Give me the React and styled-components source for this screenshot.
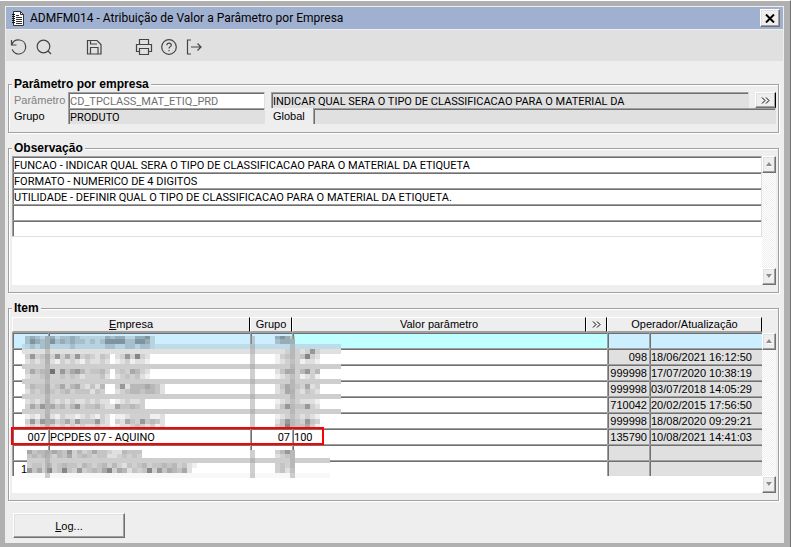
import React from 'react';
import styled, { createGlobalStyle, css } from 'styled-components';

const observacoes = [
    'FUNCAO - INDICAR QUAL SERA O TIPO DE CLASSIFICACAO PARA O MATERIAL DA ETIQUETA',
    'FORMATO - NUMERICO DE 4 DIGITOS',
    'UTILIDADE - DEFINIR QUAL O TIPO DE CLASSIFICACAO PARA O MATERIAL DA ETIQUETA.',
    '',
    '',
];

const itens = [
    {},
    { operador: '098', data: '18/06/2021 16:12:50' },
    { operador: '999998', data: '17/07/2020 10:38:19' },
    { operador: '999998', data: '03/07/2018 14:05:29' },
    { operador: '710042', data: '20/02/2015 17:56:50' },
    { operador: '999998', data: '18/08/2020 09:29:21' },
    { codigo: '007', nome: 'PCPDES 07 - AQUINO', grupo: '07', valor: '100', operador: '135790', data: '10/08/2021 14:41:03' },
    {},
    {},
];

// censored area: one letter per 5px cell, from "a" (lightest) to "i" (darkest)
const tones = {
    a: '#f0f0f0',
    b: '#e0e0e0',
    c: '#d0d0d0',
    d: '#c4c4c4',
    e: '#b8b8b8',
    f: '#a8a8a8',
    g: '#989898',
    h: '#868686',
    i: '#727272',
    q: '#b7d3df',
    r: '#a5c0cc',
    s: '#94adb8',
    t: '#7e959f',
};

const mosaic = [
    [13, 4, 'rsrqrsqrrsrqqqqqsrssqqsstq'],
    [13, 7, 'rtsrrtrsrsrrqrqrttttrrttsq'],
    [13, 12, 'qrqrrqqqqrqqqqqqrrqqrrqrrq'],
    [13, 22, 'cgcdecgcfcgcdcbdc.bcgchcb'],
    [13, 27, 'bcbcdbacbcbacbbcb.abcabba'],
    [13, 37, 'cfdedicgdfgecddec.cdcfecb'],
    [13, 42, 'bccddccdcdcbcccdb.bcdcdba'],
    [13, 52, 'ceddecdfcefcbdbe..cgbeeefedb'],
    [13, 57, 'bdcdedcdecdddbdc..bcdeedeedb'],
    [13, 67, 'bcbcdcbcbcbbcbcbb.abcbbc'],
    [13, 72, 'cfdgdfdecegcddecbbfddedc'],
    [13, 82, 'abacdbacbbabcbacb.aabccccaab'],
    [13, 87, 'cgcgefcdfcgdddgcb.cbfdcgdedb'],
    [13, 92, 'bcbcdcbcbcbcbbcbb.abbcdcbcab'],
    [15, 118, 'fdeeefedgcecdfddcbbeddd'],
    [15, 122, 'dededcedfcdedcddbbcdcdc'],
    [15, 131, 'cddcecdeddcedcdececbdcdecddedecdba'],
    [15, 136, 'gdfchcdhdcgcdedfhcfebdcdhcgdfedfb'],
    [263, 4, 'sts'],
    [263, 7, 'rssr'],
    [263, 17, 'bbcccbcgc'],
    [263, 22, 'acdccdhcb'],
    [263, 27, 'abcbcabba'],
    [263, 37, 'bdfecegce'],
    [263, 42, 'abcbcabca'],
    [263, 52, 'bdfcdcfbc'],
    [263, 57, 'bcfdcbdcb'],
    [263, 67, 'abcbcbbba'],
    [263, 72, 'bdgcddgcb'],
    [263, 82, 'abcbcbcba'],
    [263, 87, 'bdgcdcgdc'],
    [263, 92, 'cdhcddfca'],
    [263, 118, 'cegc'],
    [263, 122, 'bcdc'],
    [263, 131, 'cdcc'],
    [263, 136, 'cdbb'],
];

const Mosaic = () => (
    <MosaicSvg width="330" height="148" aria-hidden="true" shapeRendering="crispEdges">
        <rect x="10" y="12" width="319" height="5" fill="#bfdbe7" />
        <rect x="10" y="17" width="319" height="5" fill="#e0e0e0" />
        <rect x="10" y="22" width="319" height="73" fill="#fff" />
        <rect x="15" y="118" width="303" height="28" fill="#fff" />
        {[32, 47, 62, 77].map(y => (
            <rect key={y} x="10" y={y} width="319" height="5" fill="#cecece" />
        ))}
        <rect x="15" y="141" width="303" height="5" fill="#f8f8f8" />
        {mosaic.map(([x, y, cells]) =>
            cells.split('').map((tone, i) =>
                tones[tone] ? (
                    <rect key={`${x}-${y}-${i}`} x={x + i * 5} y={y} width="5" height="5" fill={tones[tone]} />
                ) : null
            )
        )}
        <rect x="15" y="126" width="303" height="5" fill="#cecece" />
        {[33, 238, 278].map(x => (
            <g key={x} fill="#a0a0a0" fillOpacity="0.5">
                <rect x={x} y="4" width="5" height="91" />
                <rect x={x} y="118" width="5" height="28" />
            </g>
        ))}
    </MosaicSvg>
);

const Group = ({ title, children }) => (
    <Fieldset>
        <legend>{title}</legend>
        {children}
    </Fieldset>
);

const Chevrons = () => (
    <svg width="9" height="7" viewBox="0 0 9 7" fill="none" stroke="#000" aria-hidden="true">
        <path d="M1 .5 4 3.500 1 6.500M5 .5 8 3.500 5 6.500" />
    </svg>
);

const ScrollBar = () => (
    <Scroll>
        <ScrollButton type="button" aria-label="Rolar para cima">
            <svg width="7" height="5" viewBox="0 0 7 5" aria-hidden="true">
                <path d="M1 5H7L4 1z" fill="#fff" />
                <path d="M0 4H6L3 0z" fill="#8c8c8c" />
            </svg>
        </ScrollButton>
        <ScrollButton type="button" aria-label="Rolar para baixo">
            <svg width="7" height="5" viewBox="0 0 7 5" aria-hidden="true">
                <path d="M1 1H7L4 5z" fill="#fff" />
                <path d="M0 0H6L3 4z" fill="#8c8c8c" />
            </svg>
        </ScrollButton>
    </Scroll>
);

const Toolbar = () => (
    <ToolbarBox>
        <ToolGroup>
            <Tool type="button" aria-label="Desfazer">
                <svg width="18" height="18" viewBox="0 0 18 18">
                    <path d="M1.500 2v5h5M1.800 6.700C3 3.500 6 1.600 9.500 2a7 7 0 1 1-7.300 9.600" />
                </svg>
            </Tool>
            <Tool type="button" aria-label="Pesquisar">
                <svg width="18" height="18" viewBox="0 0 18 18">
                    <circle cx="8.500" cy="8.500" r="6.300" />
                    <path d="m13 13 3 3" />
                </svg>
            </Tool>
        </ToolGroup>
        <ToolGroup>
            <Tool type="button" aria-label="Salvar">
                <svg width="18" height="18" viewBox="0 0 18 18">
                    <path d="M3.500 2.500H12l4 4v9.500H2.500V2.500zM5.500 16v-6.500h7.500V16M5.500 2.500v3.500h6.500" />
                </svg>
            </Tool>
        </ToolGroup>
        <ToolGroup>
            <Tool type="button" aria-label="Imprimir">
                <svg width="18" height="18" viewBox="0 0 18 18">
                    <path d="M4.500 6.500v-5h9v5M4.500 13.500h-3v-7h15v7h-3M4.500 10.500h9v6h-9z" />
                </svg>
            </Tool>
            <Tool type="button" aria-label="Ajuda">
                <svg width="18" height="18" viewBox="0 0 18 18">
                    <circle cx="9" cy="9" r="7.300" />
                    <path d="M6.800 7.200c.2-2.800 4.700-2.500 4.500 0C11.200 8.600 9 8.700 9 10.400M9 12v1.200" />
                </svg>
            </Tool>
            <Tool type="button" aria-label="Sair">
                <svg width="18" height="18" viewBox="0 0 18 18">
                    <path d="M6 2H2.500v14H6M6 9h10M12.500 5.500 16 9l-3.500 3.500" />
                </svg>
            </Tool>
        </ToolGroup>
    </ToolbarBox>
);

export default () => (
    <Frame>
        <GlobalStyle />
        <Window>
            <TitleBar>
                <svg width="13" height="15" viewBox="0 0 13 15" aria-hidden="true">
                    <path d="M1.500.5h7l3 3v11h-10z" fill="#fff" stroke="#333" />
                    <path d="M8.500.5v3h3" fill="none" stroke="#333" />
                    <path d="M0 3.500h3M0 5.500h3M0 7.500h3M0 9.500h3M0 11.500h3" stroke="#111" />
                    <path d="M4 4.500h3M4 6.500h6M4 8.500h6M4 10.500h6M4 12.500h6" stroke="#333" />
                </svg>
                <h1>ADMFM014 - Atribuição de Valor a Parâmetro por Empresa</h1>
                <CloseButton type="button" aria-label="Fechar">
                    <svg width="10" height="9" viewBox="0 0 10 9" aria-hidden="true">
                        <path d="M1 .5 9 8.500M9 .5 1 8.500" stroke="#000" strokeWidth="2" />
                    </svg>
                </CloseButton>
            </TitleBar>
            <Toolbar />
            <Content>
                <Group title="Parâmetro por empresa">
                    <FieldRow>
                        <Label $dim $width={54} htmlFor="parametro">Parâmetro</Label>
                        <Field id="parametro" $dim $width={197} defaultValue="CD_TPCLASS_MAT_ETIQ_PRD" />
                        <Spacer />
                        <Field
                            aria-label="Descrição"
                            $gray
                            readOnly
                            defaultValue="INDICAR QUAL SERA O TIPO DE CLASSIFICACAO PARA O MATERIAL DA"
                        />
                        <Spacer />
                        <MoreButton type="button" aria-label="Mais">
                            <Chevrons />
                        </MoreButton>
                    </FieldRow>
                    <FieldRow $last>
                        <Label $width={54} htmlFor="grupo">Grupo</Label>
                        <Field id="grupo" $gray $width={197} readOnly defaultValue="PRODUTO" />
                        <Spacer />
                        <Label $indent $width={42} htmlFor="global">Global</Label>
                        <Field id="global" $gray readOnly />
                    </FieldRow>
                </Group>
                <Group title="Observação">
                    <Panel>
                        <Lines>
                            {observacoes.map((texto, i) => (
                                <Field key={i} aria-label={`Observação ${i + 1}`} defaultValue={texto} />
                            ))}
                        </Lines>
                        <ScrollBar />
                    </Panel>
                </Group>
                <Group title="Item">
                    <ItemPanel>
                        <TableBox>
                            <Table>
                                <colgroup>
                                    <Col $width={36} />
                                    <Col $width={202} />
                                    <Col $width={42} />
                                    <col />
                                    <Col $width={21} />
                                    <Col $width={42} />
                                    <Col $width={113} />
                                </colgroup>
                                <thead>
                                    <tr>
                                        <th colSpan="2"><u>E</u>mpresa</th>
                                        <th>Grupo</th>
                                        <th>Valor parâmetro</th>
                                        <th><HeadButton type="button" aria-label="Mais valores"><Chevrons /></HeadButton></th>
                                        <th colSpan="2">Operador/Atualização</th>
                                    </tr>
                                </thead>
                                <tbody>
                                    {itens.map((item, i) => (
                                        <tr key={i}>
                                            <Cell $right $active={i === 0}>{item.codigo}</Cell>
                                            <Cell $active={i === 0}>{item.nome}</Cell>
                                            <Cell $right $active={i === 0}>{item.grupo}</Cell>
                                            <Cell $current={i === 0} colSpan="2">{item.valor}</Cell>
                                            <Cell $gray $right $active={i === 0}>{item.operador}</Cell>
                                            <Cell $gray $active={i === 0}>{item.data}</Cell>
                                        </tr>
                                    ))}
                                </tbody>
                            </Table>
                            <PartialCode>1</PartialCode>
                            <Mosaic />
                            <Highlight />
                        </TableBox>
                        <ScrollBar />
                    </ItemPanel>
                </Group>
                <LogButton type="button"><span><u>L</u>og...</span></LogButton>
            </Content>
        </Window>
    </Frame>
);

const GlobalStyle = createGlobalStyle`
    * {
        box-sizing: border-box;
    }

    body {
        margin: 0;
        background: #b0b0b0;
        color: #000;
        font: 11px/14px 'Liberation Sans', Arial, sans-serif;
    }

    button,
    input {
        margin: 0;
        padding: 0;
        border: 0;
        border-radius: 0;
        font: inherit;
        color: inherit;
    }
`;

const raised = css`
    display: flex;
    align-items: center;
    justify-content: center;
    background: #eee;
    border: 1px solid;
    border-color: #fff #707070 #707070 #fff;
    box-shadow: inset -1px -1px 0 #a0a0a0, inset 1px 1px 0 #e0e0e0;
`;

const sunken = css`
    border-top: 1px solid #a0a0a0;
    border-left: 1px solid #a0a0a0;
    box-shadow: inset 1px 1px 0 #707070;
    font-family: Roboto, sans-serif;
`;

const Frame = styled.div`
    display: flex;
    min-height: 100vh;
    padding: 5px 6px 5px 5px;
    background: #b0b0b0;
    border-top: 1px solid #fff;
    border-right: 1px solid #707070;
`;

const Window = styled.main`
    flex: 1;
    min-width: 0;
    background: #eee;
    border: 1px solid #eee;
`;

const TitleBar = styled.header`
    display: flex;
    align-items: center;
    height: 22px;
    padding: 0 3px 0 6px;
    background: #a0b0d0;

    h1 {
        flex: 1;
        margin: 0 0 0 5px;
        font: 12px/16px Roboto, sans-serif;
    }
`;

const CloseButton = styled.button`
    ${raised}
    width: 20px;
    height: 18px;
`;

const ToolbarBox = styled.nav`
    display: flex;
    gap: 32px;
    height: 31px;
    margin-top: 1px;
    padding: 2px 0 0 4px;
    background: #e0e0e0;
`;

const ToolGroup = styled.div`
    display: flex;
    align-items: center;
    gap: 7px;
`;

const Tool = styled.button`
    width: 18px;
    height: 18px;
    background: none;

    svg {
        display: block;
        fill: none;
        stroke: #444;
        stroke-width: 1.2;
    }
`;

const Content = styled.div`
    display: flex;
    flex-direction: column;
    gap: 8px;
    padding: 16px 4px 4px 2px;
`;

const Fieldset = styled.fieldset`
    min-width: 0;
    margin: 0;
    padding: 1px 2px 7px 3px;
    border: 1px solid #a0a0a0;
    box-shadow: 1px 1px 0 #fff, inset 1px 1px 0 #fff;

    legend {
        padding: 0 2px;
        background: #eee;
        font-size: 12px;
        font-weight: bold;
    }
`;

const FieldRow = styled.div`
    display: flex;
    height: ${({ $last }) => ($last ? 17 : 16)}px;
    padding-left: 2px;
`;

const Label = styled.label`
    flex: none;
    width: ${({ $width }) => $width}px;
    padding: 1px 0 0 ${({ $indent }) => ($indent ? 2 : 0)}px;
    color: ${({ $dim }) => ($dim ? '#808080' : '#000')};
`;

const Field = styled.input`
    ${sunken}
    flex: ${({ $width }) => ($width ? 'none' : '1')};
    width: ${({ $width }) => ($width ? `${$width}px` : '100%')};
    min-width: 0;
    height: 16px;
    padding: 1px 1px 0;
    border-right: 1px solid #e0e0e0;
    background: ${({ $gray }) => ($gray ? '#e0e0e0' : '#fff')};
    color: ${({ $dim }) => ($dim ? '#707070' : '#000')};
`;

const Spacer = styled.div`
    width: 6px;
`;

const MoreButton = styled.button`
    ${raised}
    width: 21px;
    border-right-color: #000;
`;

const Panel = styled.div`
    display: flex;
    height: 129px;
`;

const Lines = styled.div`
    flex: 1;
    background: #fff;
    display: flex;
    flex-direction: column;

    input {
        flex: none;
    }

    input:last-child {
        height: 17px;
        border-bottom: 1px solid #e0e0e0;
    }
`;

const Scroll = styled.div`
    display: flex;
    flex-direction: column;
    justify-content: space-between;
    width: 14px;
    background: repeating-conic-gradient(#fff 0 25%, #eee 0 50%) 0 0 / 2px 2px;
`;

const ScrollButton = styled.button`
    ${raised}
    width: 14px;
    height: 17px;
`;

const ItemPanel = styled.div`
    display: flex;
    height: 177px;
    padding-top: 1px;

    ${Scroll} {
        margin-top: 16px;
    }
`;

const TableBox = styled.div`
    position: relative;
    flex: 1;
    background: #fff;
`;

const Table = styled.table`
    width: 100%;
    table-layout: fixed;
    border-collapse: separate;
    border-spacing: 0;
    line-height: 13px;

    th {
        height: 15px;
        padding: 0;
        background: #eee;
        border-top: 1px solid #fff;
        border-left: 1px solid #fff;
        border-right: 1px solid #000;
        border-bottom: 1px solid #a0a0a0;
        font-weight: normal;
    }
`;

const Col = styled.col`
    width: ${({ $width }) => $width}px;
`;

const Cell = styled.td`
    ${sunken}
    height: 16px;
    padding: 2px 2px 0 1px;
    overflow: hidden;
    white-space: nowrap;
    font-family: ${({ $gray }) => ($gray ? "'Liberation Sans', Arial" : 'Roboto')}, sans-serif;
    text-align: ${({ $right }) => ($right ? 'right' : 'left')};
    background: ${({ $active, $current, $gray }) =>
        ($active && '#ccefff') || ($current && '#c0ffff') || ($gray && '#e0e0e0') || '#fff'};
`;

const HeadButton = styled.button`
    display: flex;
    align-items: center;
    justify-content: center;
    width: 100%;
    height: 13px;
    background: none;
`;

const PartialCode = styled.span`
    position: absolute;
    left: 9px;
    top: 145px;
`;

const MosaicSvg = styled.svg`
    position: absolute;
    left: 0;
    top: 15px;
`;

const Highlight = styled.div`
    position: absolute;
    left: -1px;
    top: 110px;
    width: 313px;
    height: 18px;
    border: 2px solid #f00;
`;

const LogButton = styled.button`
    ${raised}
    width: 112px;
    height: 25px;
    margin: 4px 0 0 5px;
`;
